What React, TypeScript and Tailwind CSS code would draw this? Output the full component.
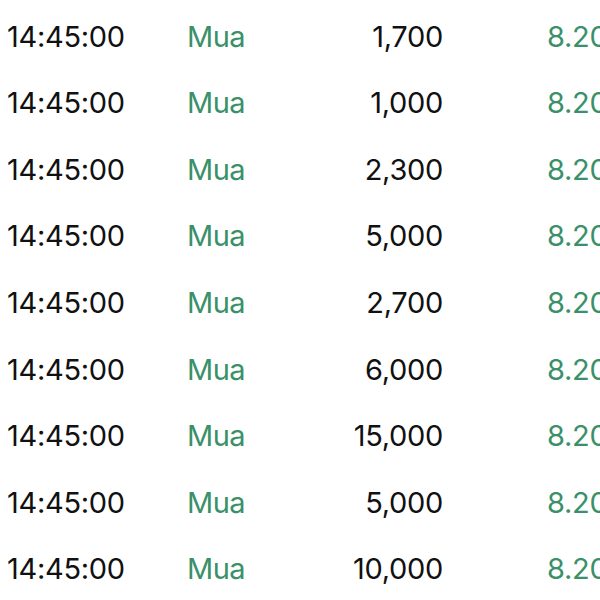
import React from "react";

const rows = ["1,700", "1,000", "2,300", "5,000", "2,700", "6,000", "15,000", "5,000", "10,000"];

export default function App() {
  return (
    <div className="w-[600px] h-[600px] overflow-hidden bg-white pt-[3px]" style={{ fontFamily: "Inter, 'Noto Sans', sans-serif" }}>
      {rows.map((q, i) => (
        <div key={i} className="relative h-[66.6px] flex items-center text-[29px] font-normal whitespace-nowrap">
          <span className="absolute left-[7px] text-[#111111] tracking-[-0.3px]">14:45:00</span>
          <span className="absolute left-[187px] text-[#3a9068] tracking-[-0.5px]">Mua</span>
          <span className="absolute right-[157px] text-[#111111] tracking-[-0.3px]">{q}</span>
          <span className="absolute left-[547px] text-[#3a9068] tracking-[-0.3px]">8.200</span>
        </div>
      ))}
    </div>
  );
}
